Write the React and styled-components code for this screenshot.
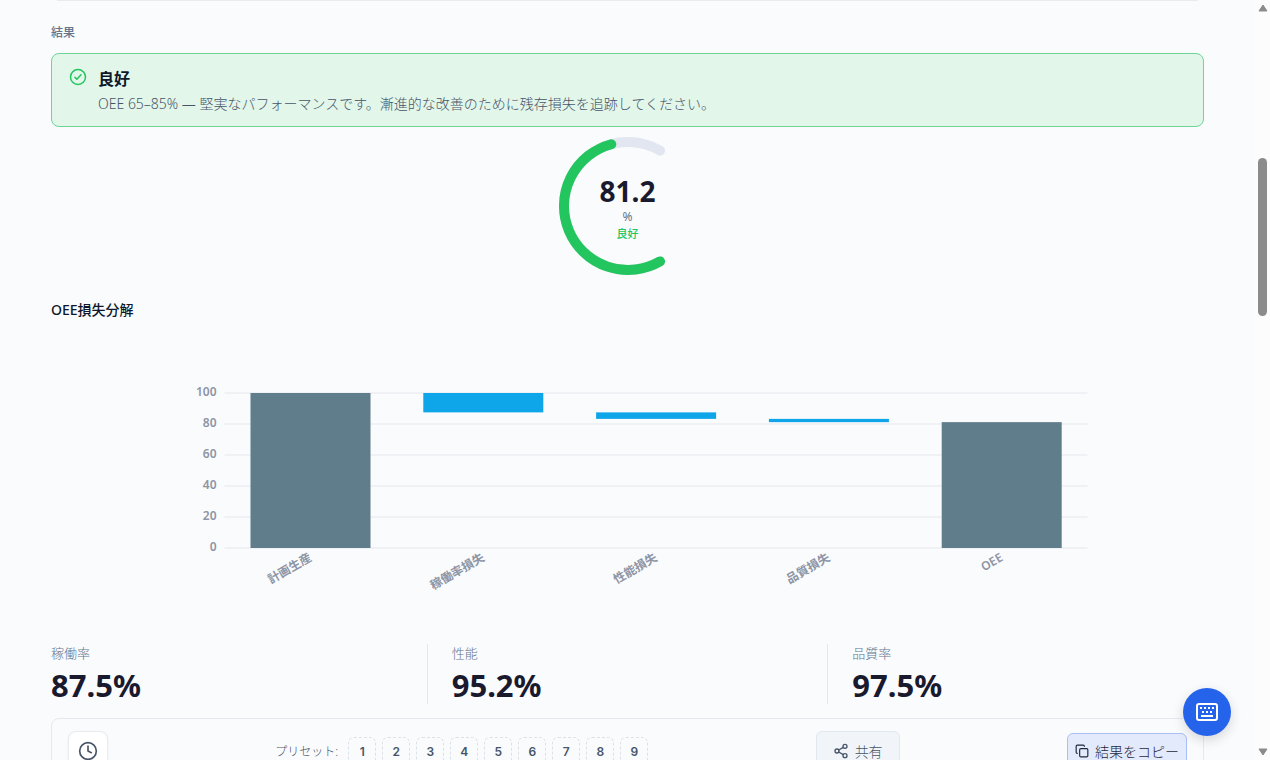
import React from 'react';
import styled, { createGlobalStyle } from 'styled-components';
import { Clock, Copy, Share2 } from 'lucide-react';

const GAUGE_RADIUS = 64;
const GAUGE_SWEEP = 240;

const bars = [
  { label: '計画生産', from: 0, to: 100, total: true },
  { label: '稼働率損失', from: 87.5, to: 100 },
  { label: '性能損失', from: 83.3, to: 87.5 },
  { label: '品質損失', from: 81.2, to: 83.3 },
  { label: 'OEE', from: 0, to: 81.2, total: true },
];

const metrics = [
  { label: '稼働率', value: '87.5%' },
  { label: '性能', value: '95.2%' },
  { label: '品質率', value: '97.5%' },
];

const presets = [1, 2, 3, 4, 5, 6, 7, 8, 9];

function arcPath(fraction) {
  const point = deg => {
    const rad = (deg * Math.PI) / 180;
    return `${70 + GAUGE_RADIUS * Math.cos(rad)} ${
      70 + GAUGE_RADIUS * Math.sin(rad)
    }`;
  };
  const sweep = GAUGE_SWEEP * fraction;
  return `M ${point(60)} A ${GAUGE_RADIUS} ${GAUGE_RADIUS} 0 ${
    sweep > 180 ? 1 : 0
  } 1 ${point(60 + sweep)}`;
}

function Gauge({ value, status }) {
  return (
    <GaugeBox>
      <GaugeSvg viewBox="0 0 140 140" aria-hidden="true">
        <clipPath id="gauge-clip">
          <rect width="107" height="140" />
        </clipPath>
        <g
          clipPath="url(#gauge-clip)"
          fill="none"
          strokeWidth="10"
          strokeLinecap="round"
        >
          <path d={arcPath(1)} stroke="#e2e6f0" />
          <path d={arcPath(value / 100)} stroke="#22c55e" />
        </g>
      </GaugeSvg>
      <GaugeText>
        <GaugeValue>{value}</GaugeValue>
        <GaugeUnit>%</GaugeUnit>
        <GaugeStatus>{status}</GaugeStatus>
      </GaugeText>
    </GaugeBox>
  );
}

function LossChart() {
  const y = value => 218 - value * 1.55;

  return (
    <ChartSvg viewBox="0 0 1152 300" role="img" aria-label="OEE損失分解">
      {[0, 20, 40, 60, 80, 100].map(tick => (
        <g key={tick}>
          <path
            d={`M173 ${Math.round(y(tick))}H1036`}
            stroke="#eff1f4"
            strokeWidth="2"
          />
          <AxisText x="165" y={y(tick) + 3} textAnchor="end">
            {tick}
          </AxisText>
        </g>
      ))}
      {bars.map((bar, i) => {
        const x = 199 + i * 172.8;
        return (
          <g key={bar.label}>
            <rect
              x={x}
              y={y(bar.to)}
              width="120"
              height={y(bar.from) - y(bar.to)}
              fill={bar.total ? '#607d8b' : '#0ea5e9'}
            />
            <AxisText
              textAnchor="end"
              transform={`translate(${x + 62} 230) rotate(-30)`}
            >
              {bar.label}
            </AxisText>
          </g>
        );
      })}
    </ChartSvg>
  );
}

function CheckIcon() {
  return (
    <svg
      width="18"
      height="18"
      viewBox="0 0 24 24"
      fill="none"
      stroke="#22c55e"
      strokeWidth="2"
      strokeLinecap="round"
      strokeLinejoin="round"
      aria-hidden="true"
    >
      <circle cx="12" cy="12" r="10" />
      <path d="m8 12.5 2.5 2.5L16 9" />
    </svg>
  );
}

function KeyboardIcon() {
  return (
    <svg width="24" height="24" viewBox="0 0 24 24" aria-hidden="true">
      <rect
        x="2"
        y="4"
        width="20"
        height="16"
        rx="2"
        fill="none"
        stroke="currentColor"
        strokeWidth="2"
      />
      <path
        d="M5 8h2M9 8h2M13 8h2M17 8h2M7 12h2M11 12h2M15 12h2M6 16h12"
        stroke="currentColor"
        strokeWidth="2"
      />
    </svg>
  );
}

function App() {
  return (
    <>
      <GlobalStyle />
      <Page>
        <Main>
          <InputPanel />
          <SectionLabel>結果</SectionLabel>
          <Alert role="status">
            <CheckIcon />
            <div>
              <AlertTitle>良好</AlertTitle>
              <AlertText>
                OEE 65–85% —
                堅実なパフォーマンスです。漸進的な改善のために残存損失を追跡してください。
              </AlertText>
            </div>
          </Alert>
          <Gauge value={81.2} status="良好" />
          <ChartTitle>OEE損失分解</ChartTitle>
          <LossChart />
          <Metrics>
            {metrics.map(metric => (
              <Metric key={metric.label}>
                <MetricLabel>{metric.label}</MetricLabel>
                <MetricValue>{metric.value}</MetricValue>
              </Metric>
            ))}
          </Metrics>
          <Toolbar>
            <HistoryButton type="button" aria-label="履歴">
              <Clock size={20} />
            </HistoryButton>
            <Presets>
              <PresetLabel>プリセット:</PresetLabel>
              {presets.map(preset => (
                <PresetButton type="button" key={preset}>
                  {preset}
                </PresetButton>
              ))}
            </Presets>
            <ShareButton type="button">
              <Share2 size={16} />
              共有
            </ShareButton>
            <CopyButton type="button">
              <Copy size={14} />
              結果をコピー
            </CopyButton>
          </Toolbar>
        </Main>
        <ScrollTrack aria-hidden="true">
          <ScrollArrow viewBox="0 0 10 8">
            <path d="M5 1 9 7H1Z" strokeWidth="1" strokeLinejoin="round" />
          </ScrollArrow>
          <ScrollThumb />
          <ScrollArrow viewBox="0 0 10 8">
            <path d="M5 7 9 1H1Z" strokeWidth="1" strokeLinejoin="round" />
          </ScrollArrow>
        </ScrollTrack>
      </Page>
      <KeyboardButton type="button" aria-label="キーボード">
        <KeyboardIcon />
      </KeyboardButton>
    </>
  );
}

const GlobalStyle = createGlobalStyle`
  * {
    box-sizing: border-box;
  }

  body {
    margin: 0;
    background: #fafbfd;
    color: #0f172a;
    font-family: 'Noto Sans', 'Noto Sans CJK JP', sans-serif;
    font-size: 14px;
  }

  button {
    font-family: inherit;
    cursor: pointer;
  }
`;

const Page = styled.div`
  display: flex;
  height: 100vh;
  overflow: hidden;
`;

const Main = styled.main`
  flex: 1;
  min-width: 0;
  padding: 0 51px;
`;

const InputPanel = styled.div`
  height: 1px;
  margin: 0 6px;
  background: #e9ebef;
`;

const SectionLabel = styled.h2`
  margin: 22px 0 10px;
  color: #64748b;
  font-size: 12px;
  font-weight: 500;
  line-height: 20px;
`;

const Alert = styled.div`
  display: flex;
  gap: 11px;
  padding: 14px 17px 12px;
  border: 1px solid #6fd596;
  border-radius: 8px;
  background: #e2f6ea;

  svg {
    flex: none;
  }
`;

const AlertTitle = styled.h3`
  margin: 0;
  font-size: 16px;
  font-weight: 600;
  line-height: 22px;
`;

const AlertText = styled.p`
  margin: 4px 0 0;
  color: #475569;
  font-weight: 300;
  line-height: 20px;
`;

const GaugeBox = styled.div`
  display: grid;
  justify-content: center;
  align-items: center;
  margin-top: 9px;

  > * {
    grid-area: 1 / 1;
  }
`;

const GaugeSvg = styled.svg`
  width: 140px;
  height: 140px;
`;

const GaugeText = styled.div`
  display: flex;
  flex-direction: column;
  align-items: center;
  padding-top: 4px;
`;

const GaugeValue = styled.strong`
  color: #1a1a2e;
  font-size: 28px;
  font-weight: 700;
  line-height: 34px;
`;

const GaugeUnit = styled.span`
  color: #64748b;
  font-size: 12px;
  line-height: 18px;
`;

const GaugeStatus = styled.span`
  color: #22c55e;
  font-size: 11px;
  font-weight: 500;
  line-height: 16px;
`;

const ChartTitle = styled.h3`
  margin: 24px 0 10px;
  font-size: 14px;
  font-weight: 500;
  line-height: 20px;
`;

const ChartSvg = styled.svg`
  display: block;
  width: 100%;
  height: 300px;
`;

const AxisText = styled.text`
  fill: #8d95a5;
  font-size: 12px;
  font-weight: 600;
`;

const Metrics = styled.dl`
  display: flex;
  gap: 24px;
  margin: 14px 0;
`;

const Metric = styled.div`
  flex: 1;

  & + & {
    padding-left: 24px;
    border-left: 1px solid #e2e8f0;
  }
`;

const MetricLabel = styled.dt`
  color: #64748b;
  font-size: 13px;
  font-weight: 300;
  line-height: 18px;
`;

const MetricValue = styled.dd`
  margin: 0;
  padding-top: 4px;
  color: #1a1a2e;
  font-size: 31px;
  font-weight: 700;
  line-height: 38px;
`;

const Toolbar = styled.div`
  display: flex;
  align-items: center;
  justify-content: space-between;
  padding: 12px 16px;
  border: 1px solid #e5e9ef;
  border-radius: 8px;
`;

const HistoryButton = styled.button`
  display: grid;
  place-items: center;
  width: 40px;
  height: 40px;
  padding: 0;
  border: 1px solid #e8ebf0;
  border-radius: 8px;
  background: #fff;
  color: #475569;
  box-shadow: 0 1px 3px rgba(15, 23, 42, 0.06);
`;

const Presets = styled.div`
  display: flex;
  align-items: center;
  gap: 6px;
`;

const PresetLabel = styled.span`
  margin-right: 4px;
  color: #475569;
  font-size: 12px;
  font-weight: 300;
`;

const PresetButton = styled.button`
  width: 28px;
  height: 28px;
  padding: 0;
  border: 1px dashed #dde2e8;
  border-radius: 6px;
  background: #f9fbfc;
  color: #475569;
  font-family: Inter, sans-serif;
  font-size: 12px;
  font-weight: 600;
`;

const ShareButton = styled.button`
  display: flex;
  align-items: center;
  gap: 6px;
  height: 40px;
  padding: 0 16px;
  border: 1px solid #e2e8f0;
  border-radius: 6px;
  background: #f1f5f9;
  color: #475569;
  font-size: 14px;
  font-weight: 300;
`;

const CopyButton = styled(ShareButton)`
  height: 36px;
  padding: 0 7px;
  border-color: #a9bff8;
  background: #e3eafc;
  color: #1e293b;
`;

const ScrollTrack = styled.div`
  display: flex;
  flex-direction: column;
  align-items: center;
  justify-content: space-between;
  width: 15px;
  padding: 4px 0;
  background: #fcfcfc;
`;

const ScrollArrow = styled.svg`
  width: 10px;
  height: 8px;
  fill: #8b8b8b;
  stroke: #8b8b8b;
`;

const ScrollThumb = styled.div`
  width: 9px;
  height: 158px;
  margin-bottom: auto;
  margin-top: 146px;
  border-radius: 5px;
  background: #8b8b8b;
`;

const KeyboardButton = styled.button`
  position: fixed;
  right: 39px;
  bottom: 24px;
  display: grid;
  place-items: center;
  width: 48px;
  height: 48px;
  padding: 0;
  border: 0;
  border-radius: 50%;
  background: #2563eb;
  color: #fff;
  box-shadow: 0 4px 12px rgba(0, 0, 0, 0.15);
`;

export default App;
